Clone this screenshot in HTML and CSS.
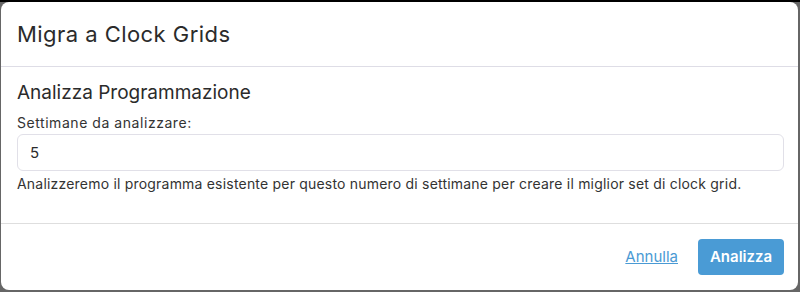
FILE: index.html
```html
<!DOCTYPE html>
<html lang="it">
<head>
<meta charset="utf-8">
<title>Migra a Clock Grids</title>
<link rel="stylesheet" href="styles.css">
</head>
<body>
<div class="backdrop">
  <div class="modal">
    <div class="modal-header">
      <h2 class="modal-title">Migra a Clock Grids</h2>
    </div>
    <div class="modal-body">
      <h3 class="section-title">Analizza Programmazione</h3>
      <label class="field-label" for="weeks">Settimane da analizzare:</label>
      <input class="field-input" id="weeks" type="text" value="5">
      <p class="field-help">Analizzeremo il programma esistente per questo numero di settimane per creare il miglior set di clock grid.</p>
    </div>
    <div class="modal-footer">
      <a class="link-btn" href="#">Annulla</a>
      <button class="primary-btn" type="button">Analizza</button>
    </div>
  </div>
</div>
</body>
</html>
```
FILE: styles.css
```css
* { box-sizing: border-box; }
html, body { margin: 0; padding: 0; }
body {
  width: 800px;
  height: 292px;
  overflow: hidden;
  font-family: Inter, "Noto Sans", sans-serif;
  background: #6a6a6a;
}
.backdrop {
  height: 292px;
  padding: 2px 2px 2px 1px;
  background: linear-gradient(#000 0 2px, #666 2px);
}
.modal {
  height: 288px;
  background: #fff;
  border-radius: 8px;
  display: flex;
  flex-direction: column;
}
.modal-header {
  height: 65px;
  padding: 0 16px;
  display: flex;
  align-items: center;
  border-bottom: 1px solid #dedde6;
}
.modal-title {
  margin: 0;
  font-size: 22px;
  letter-spacing: 0.45px;
  font-weight: 400;
  color: #2b2b2b;
}
.modal-body {
  padding: 14px 16px 0;
  height: 157px;
  border-bottom: 1px solid #dedede;
  display: flex;
  flex-direction: column;
}
.section-title {
  margin: 0;
  font-size: 19px;
  font-weight: 400;
  color: #2b2b2b;
  line-height: 24px;
}
.field-label {
  margin-top: 9px;
  font-size: 14px;
  letter-spacing: 0.55px;
  color: #333;
  line-height: 17px;
}
.field-input {
  margin-top: 3px;
  width: 767px;
  height: 37px;
  border: 1px solid #e1e0e8;
  border-radius: 6px;
  padding: 0 12px;
  font-family: inherit;
  font-size: 15px;
  color: #2b2b2b;
  outline: none;
}
.field-help {
  margin: 4px 0 0;
  font-size: 14px;
  letter-spacing: 0.2px;
  color: #333;
  line-height: 17px;
}
.modal-footer {
  flex: 1;
  display: flex;
  justify-content: flex-end;
  align-items: center;
  gap: 20px;
  padding: 0 14px 1px;
}
.link-btn {
  font-size: 15px;
  color: #4a9ad4;
  text-decoration: underline;
}
.primary-btn {
  width: 86px;
  height: 36px;
  border: none;
  border-radius: 4px;
  background: #4a9bd5;
  color: #fff;
  font-family: inherit;
  font-size: 15px;
  font-weight: 600;
}
```
